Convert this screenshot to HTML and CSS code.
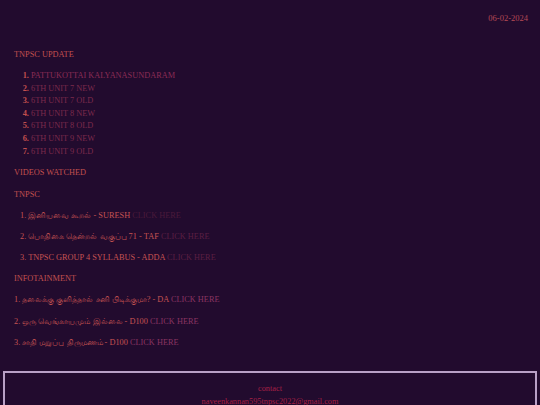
FILE: index.html
```html
<!DOCTYPE html>
<html>
<head>
<meta charset="utf-8">
<link rel="stylesheet" href="styles.css">
</head>
<body>
<div class="page">
  <div class="date">06-02-2024</div>
  <p class="head first">TNPSC UPDATE</p>
  <ol class="units">
    <li><a class="lnk">PATTUKOTTAI KALYANASUNDARAM</a></li>
    <li><a class="lnk v">6TH UNIT 7 NEW</a></li>
    <li><a class="lnk v">6TH UNIT 7 OLD</a></li>
    <li><a class="lnk v">6TH UNIT 8 NEW</a></li>
    <li><a class="lnk v">6TH UNIT 8 OLD</a></li>
    <li><a class="lnk v">6TH UNIT 9 NEW</a></li>
    <li><a class="lnk v">6TH UNIT 9 OLD</a></li>
  </ol>
  <p class="head">VIDEOS WATCHED</p>
  <p class="head">TNPSC</p>
  <p class="item indent">1. <span class="ta">இனியவை கூறல்</span> - SURESH <a class="click dark">CLICK HERE</a></p>
  <p class="item indent">2. <span class="ta">பொதிகை தென்றல் வகுப்பு</span> 71 - TAF <a class="click mid">CLICK HERE</a></p>
  <p class="item indent">3. TNPSC GROUP 4 SYLLABUS - ADDA <a class="click mid">CLICK HERE</a></p>
  <p class="head">INFOTAINMENT</p>
  <p class="item">1. <span class="ta">தலைக்கு குளித்தால் சனி பிடிக்குமா?</span> - DA <a class="click bright">CLICK HERE</a></p>
  <p class="item">2. <span class="ta">ஒரு வெங்காயமும் இல்லை</span> - D100 <a class="click bright">CLICK HERE</a></p>
  <p class="item">3. <span class="ta">சாதி மறுப்பு திருமணம்</span> - D100 <a class="click bright">CLICK HERE</a></p>
</div>
<footer class="footer">
  <p class="contact">contact</p>
  <p class="mail">naveenkannan595tnpsc2022@gmail.com</p>
</footer>
</body>
</html>
```
FILE: styles.css
```css
html, body {
  margin: 0;
  padding: 0;
  background: #220b2e;
  height: 100%;
  overflow: hidden;
}
body {
  font-family: "Liberation Serif", "Times New Roman", serif;
  font-size: 8.3px;
  color: #c0504d;
}
.page {
  padding: 12px 12px 0 14px;
}
.date {
  text-align: right;
  line-height: 12px;
  font-size: 8.5px;
  color: #b54a55;
}
p {
  margin: 9.2px 0 0;
  line-height: 12px;
  height: 12px;
}
.head.first {
  margin-top: 25px;
}
.head {
  color: #c2514e;
}
.units {
  margin: 9px 0 0;
  padding-left: 17px;
  line-height: 12.6px;
}
.units li::marker {
  font-weight: bold;
  color: #c2504f;
}
.lnk {
  color: #8c2c55;
}
.lnk.v {
  color: #7c2a4c;
}
.item {
  color: #c65352;
}
.ta {
  font-size: 1.02em;
  line-height: 1;
}
.indent {
  padding-left: 6px;
}
.click.dark {
  color: #4b1a3b;
}
.click.mid {
  color: #5b1f43;
}
.click.bright {
  color: #8a3462;
}
.footer {
  margin: 22px 3px 0;
  border: 2px solid #b9a0c6;
  border-bottom: none;
  padding-top: 9px;
  text-align: center;
  height: 60px;
}
.footer p {
  margin: 0;
  line-height: 13px;
  height: 13px;
  color: #a52046;
}
```
